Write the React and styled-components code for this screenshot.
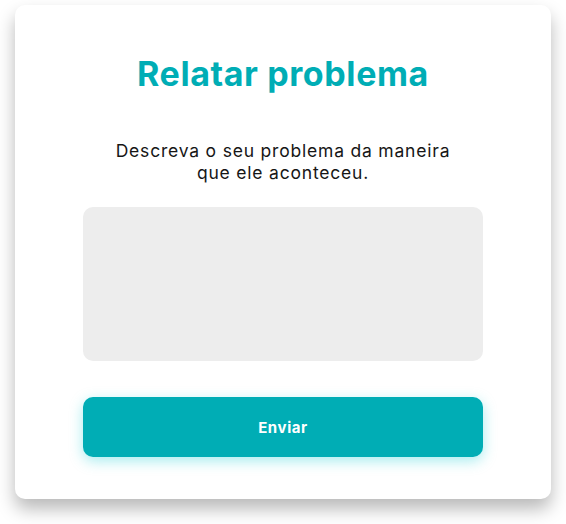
import React from "react";
import styled, { createGlobalStyle } from "styled-components";

const teal = "#00adb5";

const GlobalStyle = createGlobalStyle`
  body {
    margin: 0;
    background: #ffffff;
    font-family: "Inter", "Noto Sans", sans-serif;
  }
`;

const Page = styled.div`
  padding: 5px 15px 26px;
`;

const Card = styled.div`
  width: 536px;
  box-sizing: border-box;
  background: #ffffff;
  border-radius: 10px;
  box-shadow: 0 10px 18px rgba(0, 0, 0, 0.28);
  padding: 49px 68px 42px;
  display: flex;
  flex-direction: column;
  align-items: center;
`;

const Title = styled.h1`
  margin: 0;
  font-size: 34px;
  line-height: 40px;
  font-weight: 700;
  letter-spacing: 0.6px;
  color: ${teal};
`;

const Description = styled.p`
  margin: 46px 0 0;
  text-align: center;
  font-size: 17.5px;
  line-height: 22px;
  letter-spacing: 0.8px;
  color: #161616;
`;

const TextArea = styled.textarea`
  margin-top: 23px;
  width: 400px;
  height: 154px;
  box-sizing: border-box;
  border: none;
  border-radius: 10px;
  background: #ededed;
  resize: none;
  outline: none;
  padding: 12px;
  font-family: inherit;
  font-size: 15px;
`;

const Button = styled.button`
  margin-top: 36px;
  width: 400px;
  height: 60px;
  border: none;
  border-radius: 10px;
  background: ${teal};
  color: #ffffff;
  font-family: inherit;
  font-size: 15px;
  font-weight: 700;
  letter-spacing: 0.6px;
  cursor: pointer;
  box-shadow: 0 4px 14px rgba(0, 200, 210, 0.35);
`;

export default function App() {
  return (
    <>
      <GlobalStyle />
      <Page>
        <Card>
          <Title>Relatar problema</Title>
          <Description>
            Descreva o seu problema da maneira
            <br />
            que ele aconteceu.
          </Description>
          <TextArea />
          <Button>Enviar</Button>
        </Card>
      </Page>
    </>
  );
}
